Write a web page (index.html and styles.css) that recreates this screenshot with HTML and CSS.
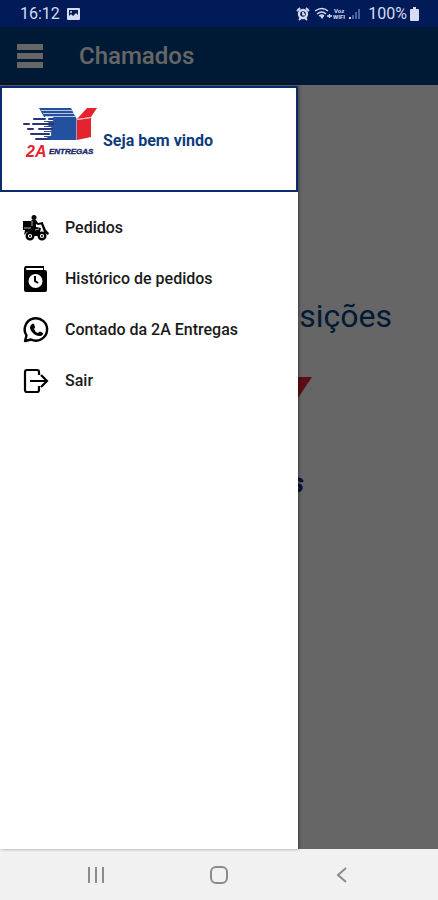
FILE: index.html
```html
<!DOCTYPE html>
<html lang="pt-BR">
<head>
  <meta charset="UTF-8" />
  <meta name="viewport" content="width=device-width, initial-scale=1.0"/>
  <title>Chamados</title>
  <link rel="stylesheet" href="styles.css">
</head>
<body>
  <div class="status-bar">
    <span>16:12</span>
    <svg width="13" height="12" viewBox="0 0 13 12">
      <path fill="#d5dcf2" fill-rule="evenodd" d="M1 0H12Q13 0 13 1V11Q13 12 12 12H1Q0 12 0 11V1Q0 0 1 0ZM2 2V8L4 6L6 8L9 5L11 7V2Z"/>
      <circle cx="4" cy="4" r="1" fill="#d5dcf2"/>
    </svg>
    <svg class="status-right" width="66" height="14" viewBox="0 0 66 14">
      <g fill="none" stroke="#d5dcf2">
        <circle cx="8" cy="7" r="4" stroke-width="2.400"/>
        <path stroke-width="1.800" d="M2 4L5 1M14 4L11 1M4 13L6 11M12 13L10 11M8 5V7.500H10"/>
        <path stroke-width="1.300" d="M20 4Q27 -1 33 4M22 7Q27 3 31 7M24 9Q27 7 29 9M32 9H37M34.500 7V11"/>
      </g>
      <path fill="#d5dcf2" d="M25 9H29L27 12Z"/>
      <text class="tiny" x="39" y="6">Voz</text>
      <text class="tiny" x="38" y="12">WIFI</text>
      <path fill="#d5dcf2" d="M54 10H56V12H54Z"/>
      <path fill="#4d63a0" d="M57 8H59V12H57ZM60 5H62V12H60ZM63 2H65V12H63Z"/>
    </svg>
    <span>100%</span>
    <svg width="9" height="14" viewBox="0 0 9 14">
      <path fill="#d5dcf2" d="M3 0H6V2H8Q9 2 9 3V13Q9 14 8 14H1Q0 14 0 13V3Q0 2 1 2H3Z"/>
    </svg>
  </div>

  <div class="app">
    <header class="toolbar">
      <button class="menu-button" aria-label="Menu">
        <svg width="26" height="24" viewBox="0 0 26 24">
          <path fill="#fff" d="M0 0H26V6H0ZM0 9H26V15H0ZM0 18H26V24H0Z"/>
        </svg>
      </button>
      <h1>Chamados</h1>
    </header>
    <main class="page">
      <h2>Requisições</h2>
      <svg class="page-logo" viewBox="0 0 74 50"><use href="#logo"/></svg>
    </main>

    <div class="scrim"></div>

    <aside class="drawer">
      <div class="drawer-header">
        <svg class="drawer-logo" viewBox="0 0 74 50">
          <g id="logo">
            <path fill="#24519f" d="M16 0H48L53 10V32H21V9Z"/>
            <path stroke="#dfe6f4" stroke-width="0.800" d="M18 2.500H49M20 5.500H51M22 8.500H52"/>
            <path stroke="#fff" stroke-width="4" stroke-linecap="round" d="M20 11H29M18 16H24M20 21H27M20 26H27M20 31H23"/>
            <path stroke="#2b3474" stroke-width="2" stroke-linecap="round" d="M11 11H22M26 11H47M1 16H6M10 16H31M5 21H10M16 21H30M8 26H26M13 31H25"/>
            <path stroke="#24519f" stroke-width="3" d="M30 11H53M31 16H53M30 21H53M28 26H53M26 30.500H53"/>
            <path fill="#e5232f" d="M64 0H74L68 9L54 11Z"/>
            <path fill="#e5232f" d="M54 12L68 10V29L54 32Z"/>
            <path stroke="#f4a0a5" stroke-width="0.800" d="M54 11.500L68 9.500"/>
            <path stroke="#8ba2cf" stroke-width="1" d="M53.500 10V32"/>
            <text class="logo-2a" x="3" y="49">2A</text>
            <text class="logo-name" x="26" y="46">ENTREGAS</text>
          </g>
        </svg>
        <strong>Seja bem vindo</strong>
      </div>
      <nav class="menu">
        <a href="#pedidos">
          <svg width="26" height="26" viewBox="0 0 26 26">
            <circle cx="11" cy="2.500" r="2.500"/>
            <path d="M0 6H8L9 5H13L15 8L20 7V9L15 10L13 9V12L18 13L17 17H21L18 9L20 8L23 15L26 18L25 20Q20 16 16 21H11Q9 16 4 17L1 20L2 15H0Z"/>
            <path fill="none" stroke="#fff" stroke-width="0.700" d="M1 13H8M9 6V11M12 15L16 14"/>
            <g fill="#fff" stroke="#000" stroke-width="2.400">
              <circle cx="7" cy="21" r="3.300"/>
              <circle cx="19" cy="21" r="3.300"/>
            </g>
            <circle cx="7" cy="21" r="1"/>
            <circle cx="19" cy="21" r="1"/>
          </svg>
          Pedidos
        </a>
        <a href="#historico">
          <svg width="26" height="26" viewBox="0 0 26 26">
            <path fill-rule="evenodd" d="M3 0H21V4H22Q24 4 24 6V24Q24 26 22 26H3Q1 26 1 24V3Q1 0 3 0ZM4 2Q3 2 3 3Q3 4 4 4H20V2Z"/>
            <circle cx="12.500" cy="15" r="7" fill="#fff"/>
            <path fill="none" stroke="#000" stroke-width="2" d="M12 10V15L15 17"/>
          </svg>
          Histórico de pedidos
        </a>
        <a href="#contato">
          <svg width="26" height="26" viewBox="0 0 26 26">
            <path fill="none" stroke="#000" stroke-width="2.400" stroke-linejoin="round" d="M2 24L3.500 18.500A11.200 11.200 0 1 1 8 22.500Z"/>
            <path d="M9 7Q10 6 11 7L12 10Q12 11 11 12Q12 15 15 16L16 15Q17 14 18 15L20 16Q20 19 17 19Q12 19 9 15Q5 10 9 7Z"/>
          </svg>
          Contado da 2A Entregas
        </a>
        <a href="#sair">
          <svg width="26" height="26" viewBox="0 0 26 26">
            <path fill="none" stroke="#000" stroke-width="2.200" d="M16 7V4Q16 2 14 2H4Q2 2 2 4V22Q2 24 4 24H14Q16 24 16 22V18M7 13H24M18 7L24 13L18 19"/>
          </svg>
          Sair
        </a>
      </nav>
    </aside>
  </div>

  <div class="nav-bar">
    <button aria-label="Recentes">
      <svg width="18" height="18" viewBox="0 0 18 18"><path d="M2 1V17M9 1V17M16 1V17"/></svg>
    </button>
    <button aria-label="Início">
      <svg width="18" height="18" viewBox="0 0 18 18"><rect x="1" y="1" width="16" height="16" rx="5"/></svg>
    </button>
    <button aria-label="Voltar">
      <svg width="18" height="18" viewBox="0 0 18 18"><path d="M13 2L5 9L13 16"/></svg>
    </button>
  </div>
</body>
</html>
```

FILE: styles.css
```css
* {
  box-sizing: border-box;
}
body {
  margin: 0;
  min-height: 100vh;
  display: flex;
  flex-direction: column;
  font-family: Roboto, "Liberation Sans", sans-serif;
  font-size: 16px;
  background: #fff;
}
svg {
  flex: none;
  overflow: visible;
}
button {
  display: flex;
  padding: 0;
  border: none;
  background: none;
  cursor: pointer;
}
.logo-2a,
.logo-name {
  font-family: "Liberation Sans", sans-serif;
  font-weight: bold;
  font-style: italic;
}
.logo-2a {
  font-size: 16px;
  fill: #e5232f;
}
.logo-name {
  font-size: 8px;
  fill: #1c2a68;
  stroke: #1c2a68;
  stroke-width: 0.4px;
}

/* system bars */
.status-bar {
  display: flex;
  align-items: center;
  gap: 7px;
  height: 27px;
  padding: 0 19px 0 20px;
  background: #001b58;
  color: #d5dcf2;
}
.status-right {
  margin-left: auto;
}
.status-bar svg:last-child {
  margin-left: -4px;
}
.tiny {
  font-size: 6px;
  font-weight: bold;
  fill: #d5dcf2;
}
.nav-bar {
  display: flex;
  justify-content: space-around;
  align-items: center;
  height: 51px;
  padding: 0 34px;
  background: #f1f1f1;
}
.nav-bar svg {
  fill: none;
  stroke: #8b8b8b;
  stroke-width: 2;
}

/* screen */
.app {
  position: relative;
  flex: 1;
  display: flex;
  flex-direction: column;
}
.toolbar {
  display: flex;
  align-items: center;
  gap: 36px;
  height: 58px;
  padding: 0 17px;
  background: #004284;
  color: #fff;
}
.toolbar h1 {
  margin: 0;
  font-size: 24px;
  font-weight: 500;
}
.page {
  flex: 1;
  display: flex;
  flex-direction: column;
  align-items: center;
  gap: 40px;
  padding-top: 210px;
}
.page h2 {
  align-self: flex-end;
  margin: 0;
  padding-right: 46px;
  font-size: 32px;
  line-height: 42px;
  font-weight: 400;
  color: #004284;
}
.page-logo {
  width: 185px;
  height: 125px;
}
.scrim {
  position: absolute;
  inset: 0;
  background: rgba(0, 0, 0, 0.6);
}

/* drawer */
.drawer {
  position: absolute;
  top: 59px;
  bottom: 0;
  left: 0;
  width: 68%;
  background: #fff;
  box-shadow: 1px 0 3px rgba(0, 0, 0, 0.4);
}
.drawer-header {
  display: flex;
  align-items: center;
  gap: 6px;
  height: 106px;
  padding: 0 21px;
  border: 2px solid #0b2c6b;
  color: #0d3c7c;
}
.drawer-header strong {
  padding-top: 2px;
}
.drawer-logo {
  width: 74px;
  height: 50px;
  margin-bottom: 12px;
}
.menu {
  padding-top: 10px;
}
.menu a {
  display: flex;
  align-items: center;
  gap: 16px;
  height: 51px;
  padding: 0 23px;
  color: #1a1a1a;
  font-weight: 500;
  text-decoration: none;
}
```
